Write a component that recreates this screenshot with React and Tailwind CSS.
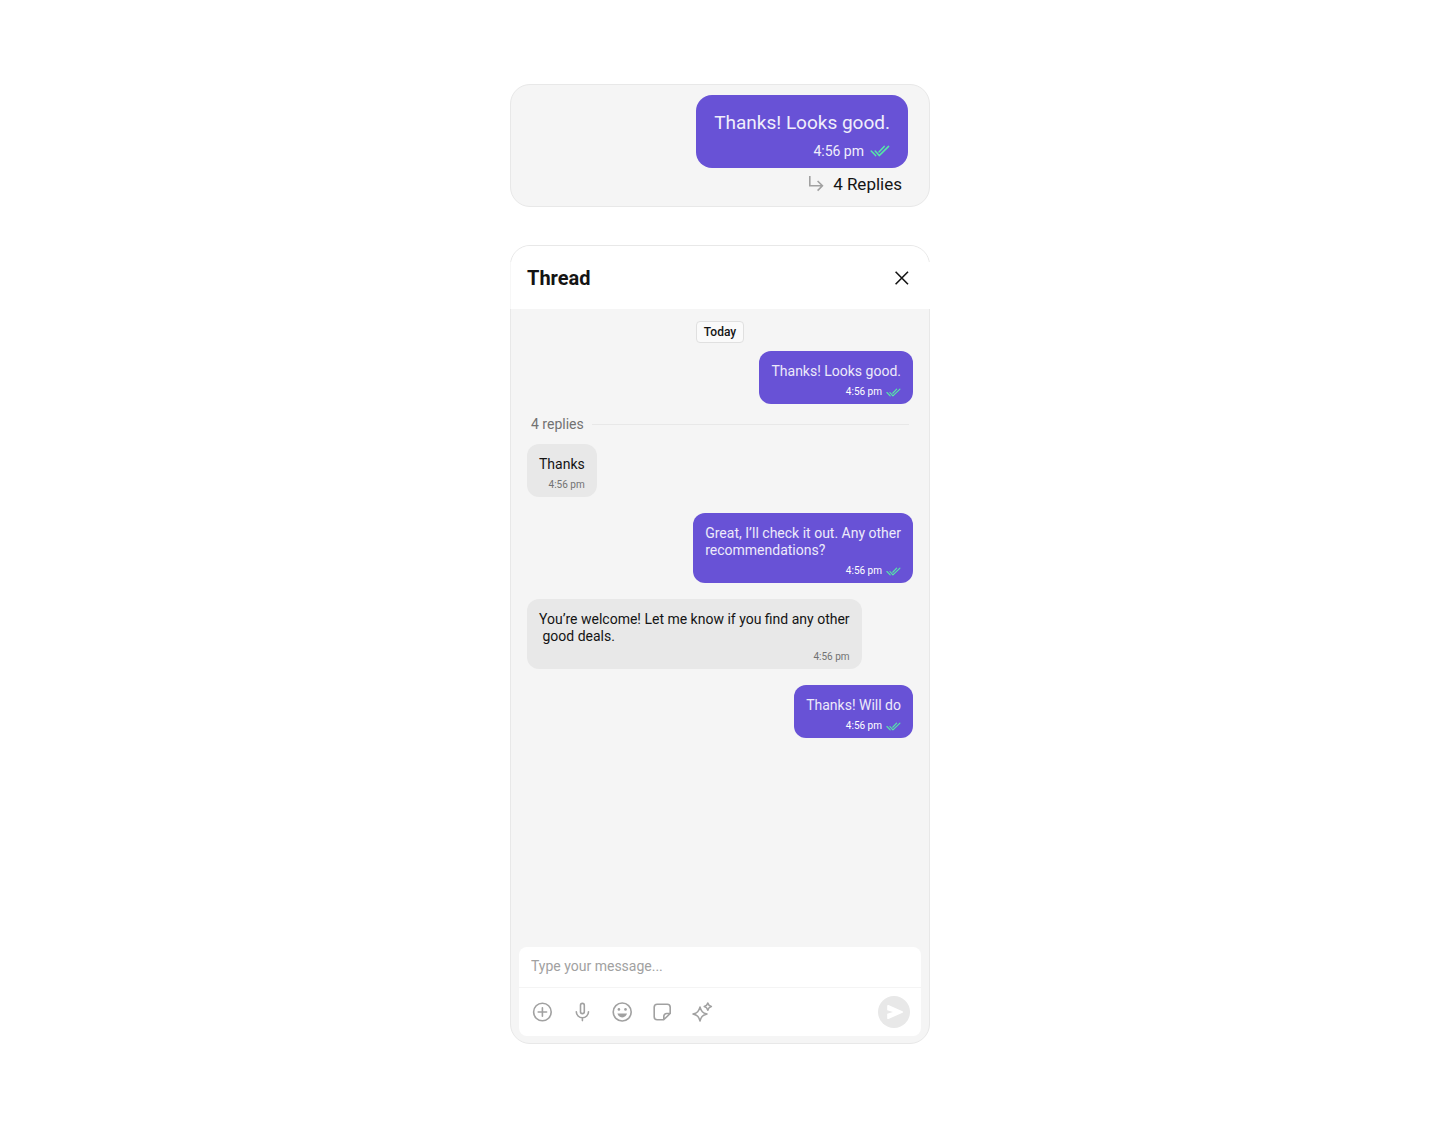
function DoubleCheck({ large = false }) {
  return (
    <svg
      role="img"
      aria-label="Read"
      viewBox="0 0 20 12"
      className={large ? 'h-3 w-5 text-[#56e8a7]' : 'h-[9px] w-[15px] text-[#56e8a7]'}
      fill="none"
      stroke="currentColor"
      strokeWidth="1.5"
      strokeLinecap="round"
      strokeLinejoin="round"
    >
      <path d="M1.2 6 5.6 10.6" />
      <path d="M5.2 6 9.2 10.600 18.600 1.400" />
      <path d="M9 7 14.200 1.400" />
    </svg>
  )
}

function Bubble({ text, outgoing = false }) {
  return (
    <div
      className={
        outgoing
          ? 'flex flex-col gap-1.5 self-end rounded-xl bg-[#6852d6] px-3 pt-3 pb-1.5 text-white'
          : 'flex flex-col gap-1.5 self-start rounded-xl bg-[#e8e8e8] px-3 pt-3 pb-1.5 text-[#141414]'
      }
    >
      <p className={outgoing ? 'text-sm/[17px] whitespace-pre-wrap text-[#edeafa]' : 'text-sm/[17px] whitespace-pre-wrap'}>{text}</p>
      <div className="flex items-center justify-end gap-1 text-[10px]/[12px]">
        <time className={outgoing ? '' : 'text-[#727272]'}>4:56 pm</time>
        {outgoing && <DoubleCheck />}
      </div>
    </div>
  )
}

const icon = {
  viewBox: '0 0 24 24',
  fill: 'none',
  stroke: 'currentColor',
  strokeWidth: '1.6',
  strokeLinecap: 'round',
  strokeLinejoin: 'round',
  className: 'size-6',
  'aria-hidden': true,
}

const tools = [
  {
    label: 'Attach',
    drawing: (
      <svg {...icon}>
        <circle cx="12.400" cy="12" r="8.8" />
        <path d="M12.400 7.8v8.4M8.200 12h8.4" />
      </svg>
    ),
  },
  {
    label: 'Record voice',
    drawing: (
      <svg {...icon}>
        <rect x="10.500" y="3.4" width="3.800" height="10.2" rx="1.900" />
        <path d="M6.300 11.8a6.100 6 0 0 0 12.200 0M12.400 17.8v2.8" />
      </svg>
    ),
  },
  {
    label: 'Emoji',
    drawing: (
      <svg {...icon}>
        <circle cx="12.200" cy="12" r="9" />
        <g fill="currentColor" stroke="none">
          <circle cx="8.9" cy="9.4" r="1.3" />
          <circle cx="15.5" cy="9.4" r="1.3" />
          <path d="M7.4 13.6h9.6c-.5 2.2-2.4 3.8-4.8 3.8s-4.3-1.6-4.8-3.8Z" />
        </g>
      </svg>
    ),
  },
  {
    label: 'Stickers',
    drawing: (
      <svg {...icon}>
        <path d="M20.200 13.500V7.200A3 3 0 0 0 17.200 4.200H7.200A3 3 0 0 0 4.200 7.200v9.600A3 3 0 0 0 7.200 19.800h6.500L20.200 13.500h-3.600a2.800 2.800 0 0 0-2.800 2.800V19.800" />
      </svg>
    ),
  },
  {
    label: 'Assistant',
    drawing: (
      <svg {...icon} strokeWidth="1.5">
        <path d="M10 7c1.2 4.4 2.6 5.8 7 7-4.4 1.2-5.8 2.6-7 7-1.2-4.4-2.6-5.8-7-7 4.4-1.2 5.8-2.6 7-7Z" />
        <path d="M17.8 3c.6 2.3 1.3 3 3.6 3.6-2.3.6-3 1.3-3.6 3.6-.6-2.3-1.3-3-3.6-3.6 2.3-.6 3-1.3 3.6-3.6Z" />
      </svg>
    ),
  },
]

export default function App() {
  return (
    <main className="flex min-h-screen flex-col items-center gap-[38px] bg-white px-4 py-[84px] font-['Roboto',sans-serif] text-[#141414]">
      <section className="flex w-full max-w-[420px] flex-col items-end rounded-[20px] border border-[#e8e8e8] bg-[#f5f5f5] pt-[10px] pr-[21px] pb-[9px]">
        <div className="flex flex-col gap-[6px] rounded-2xl bg-[#6852d6] px-[18px] pt-4 pb-[7px] text-white">
          <p className="text-[19px]/[24px] text-[#f0eefb]">Thanks! Looks good.</p>
          <div className="flex items-center justify-end gap-[6px] text-sm/[20px] text-[#f0eefb]">
            <time>4:56 pm</time>
            <DoubleCheck large />
          </div>
        </div>
        <button type="button" className="flex items-center gap-2 pt-1 pr-[6px] text-[17px]/[25px]">
          <svg
            viewBox="0 0 18 18"
            className="size-[18px] text-[#a1a1a1]"
            fill="none"
            stroke="currentColor"
            strokeWidth="1.6"
            aria-hidden="true"
          >
            <path d="M2.8 0v9.8H15M10.6 5l4.8 4.800-4.800 4.800" />
          </svg>
          4 Replies
        </button>
      </section>

      <section className="flex w-full max-w-[420px] flex-col rounded-[20px] border border-[#e8e8e8] bg-[#f5f5f5]">
        <header className="rounded-t-[19px] bg-white pt-4">
          <div className="-mx-px flex h-[47px] items-start justify-between border-l border-[#f7f7f7] bg-white px-4">
            <h1 className="pt-1 text-xl/[24px] font-bold">Thread</h1>
            <button type="button" aria-label="Close thread" className="pt-1">
              <svg viewBox="0 0 24 24" className="size-6" fill="none" stroke="currentColor" strokeWidth="1.6" aria-hidden="true">
                <path d="m5.6 5.8 12.4 12.4M18 5.8 5.6 18.2" />
              </svg>
            </button>
          </div>
        </header>

        <div className="flex min-h-[638px] flex-col px-4 pt-3">
          <div className="self-center rounded-[4px] border border-[#e0e0e0] bg-[#fafafa] px-[7px] text-xs/[20px] font-medium">
            Today
          </div>
          <div className="flex flex-col pt-2">
            <Bubble outgoing text="Thanks! Looks good." />
          </div>
          <div className="flex h-10 items-center gap-2 px-1 text-sm/[17px] text-[#727272]">
            4 replies
            <hr className="flex-1 border-[#e8e8e8]" />
          </div>
          <div className="flex flex-col gap-4">
            <Bubble text="Thanks" />
            <Bubble outgoing text={'Great, I’ll check it out. Any other\nrecommendations?'} />
            <Bubble text={'You’re welcome! Let me know if you find any other\n good deals.'} />
            <Bubble outgoing text="Thanks! Will do" />
          </div>
        </div>

        <form className="mx-2 mb-[7px] rounded-lg bg-white" onSubmit={(event) => event.preventDefault()}>
          <input
            type="text"
            aria-label="Message"
            placeholder="Type your message..."
            className="block h-[41px] w-full border-b border-[#f4f4f4] px-3 pb-[2px] text-sm outline-none placeholder:text-[#a1a1a1]"
          />
          <div className="flex h-12 items-center justify-between px-[11px]">
            <div className="flex gap-4 text-[#a1a1a1]">
              {tools.map((tool) => (
                <button key={tool.label} type="button" aria-label={tool.label}>
                  {tool.drawing}
                </button>
              ))}
            </div>
            <button type="submit" aria-label="Send" className="flex size-8 items-center justify-center rounded-full bg-[#e8e8e8] text-white">
              <svg viewBox="0 0 24 24" className="size-6" fill="currentColor" aria-hidden="true">
                <path d="M5.2 5.8c0-.8.6-1.100 1.300-.8l14 6.200c.7.3.7 1.200 0 1.500l-14 6.300c-.7.3-1.300 0-1.300-.8v-4.500l5.800-1.700-5.800-1.700Z" />
              </svg>
            </button>
          </div>
        </form>
      </section>
    </main>
  )
}
